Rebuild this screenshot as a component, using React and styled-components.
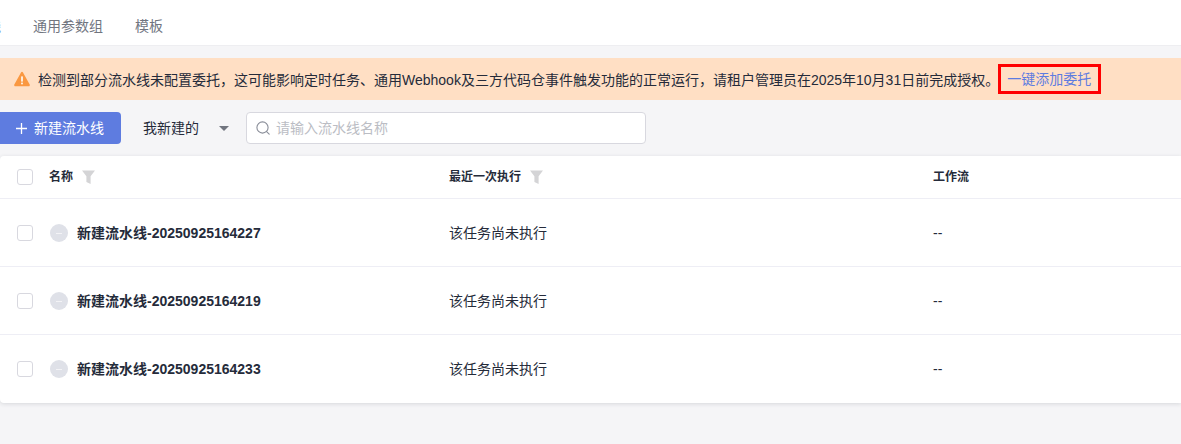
import React from 'react';
import styled, { createGlobalStyle } from 'styled-components';

const GlobalStyle = createGlobalStyle`
  html, body {
    margin: 0;
    padding: 0;
    height: 100%;
    background: #f5f5f7;
  }
  body {
    font-family: "Liberation Sans", "Noto Sans CJK SC", sans-serif;
    font-size: 14px;
    color: #252b3a;
    overflow: hidden;
  }
`;

const Page = styled.div`
  width: 1181px;
  height: 444px;
  overflow: hidden;
  background: #f5f5f7;
`;

const Nav = styled.nav`
  height: 45px;
  display: flex;
  align-items: center;
  gap: 32px;
  margin-left: -41px;
  background: #fff;
  border-bottom: 1px solid #eeeef1;
`;

const Tab = styled.a`
  font-size: 14px;
  line-height: 18px;
  margin-top: 10px;
  margin-bottom: 4px;
  color: ${props => (props.$active ? '#5e7ce0' : '#71757f')};
`;

const Banner = styled.div`
  height: 42px;
  margin-top: 12px;
  display: flex;
  align-items: center;
  padding-left: 14px;
  background: #ffdfc4;
`;

const BannerText = styled.span`
  margin-left: 8px;
  white-space: nowrap;
`;

const DelegateLink = styled.a`
  margin-left: -1px;
  padding: 0 7px 0 6px;
  height: 24px;
  line-height: 24px;
  border: 3px solid #ff0000;
  color: #5e7ce0;
  white-space: nowrap;
`;

const Toolbar = styled.div`
  display: flex;
  align-items: center;
  height: 32px;
  margin-top: 12px;
  margin-left: -20px;
`;

const CreateButton = styled.button`
  width: 141px;
  height: 32px;
  display: flex;
  align-items: center;
  padding: 0 0 0 36px;
  gap: 7px;
  border: 0;
  border-radius: 4px;
  background: #5e7ce0;
  color: #fff;
  font: inherit;
`;

const ToolbarLabel = styled.span`
  padding-bottom: 2px;
`;

const OwnerSelect = styled.div`
  display: flex;
  align-items: center;
  margin-left: 22px;
  width: 103px;
  justify-content: space-between;
  padding-right: 17px;
  box-sizing: border-box;
`;

const Caret = styled.span`
  width: 0;
  height: 0;
  border-left: 5px solid transparent;
  border-right: 5px solid transparent;
  border-top: 5px solid #71757f;
`;

const SearchBox = styled.div`
  width: 400px;
  height: 32px;
  display: flex;
  align-items: center;
  gap: 5px;
  padding-left: 8px;
  box-sizing: border-box;
  background: #fff;
  border: 1px solid #d8d8df;
  border-radius: 4px;
  color: #bbbdc4;
`;

const Table = styled.div`
  margin-top: 12px;
  background: #fff;
  border-radius: 4px 0 0 4px;
  box-shadow: 0 1px 4px rgba(37, 43, 58, 0.14);
  height: 247px;
`;

const Row = styled.div`
  display: grid;
  grid-template-columns: 49px 400px 484px 1fr;
  align-items: center;
  height: ${props => (props.$head ? '42px' : '66px')};
  padding-top: ${props => (props.$head ? '0' : '1px')};
  border-bottom: ${props => (props.$last ? '0' : '1px solid #eeeef5')};
  font-weight: ${props => (props.$head ? 700 : 400)};
  font-size: ${props => (props.$head ? '12px' : '14px')};
`;

const CheckCell = styled.div`
  padding-left: 17px;
  display: flex;
  align-items: center;
`;

const Checkbox = styled.span`
  width: 14px;
  height: 14px;
  border: 1px solid #d8d8df;
  border-radius: 3px;
  background: #fff;
`;

const HeadCell = styled.div`
  display: flex;
  align-items: center;
  gap: 9px;
  line-height: 16px;
`;

const NameCell = styled.div`
  display: flex;
  align-items: center;
  gap: 9px;
  padding-left: 1px;
  font-weight: 700;
`;

const CellText = styled.span`
  display: block;
  padding-bottom: 2px;
`;

const StatusDot = styled.span`
  width: 18px;
  height: 18px;
  border-radius: 50%;
  background: #dfe1e8;
  display: flex;
  align-items: center;
  justify-content: center;

  &:before {
    content: '';
    width: 6px;
    height: 1px;
    background: #f3f3f6;
  }
`;

const WarnIcon = () => (
  <svg width="16" height="16" viewBox="0 0 16 16">
    <path d="M8 .8a1.2 1.2 0 0 1 1 .6l6.7 12.2a1.1 1.1 0 0 1-1 1.6H1.3a1.1 1.1 0 0 1-1-1.6L7 1.4a1.2 1.2 0 0 1 1-.6z" fill="#fa9841" />
    <rect x="7.2" y="5.4" width="1.6" height="5.2" fill="#fff" />
    <rect x="7.2" y="11.6" width="1.6" height="1.7" fill="#fff" />
  </svg>
);

const PlusIcon = () => (
  <svg width="11" height="11" viewBox="0 0 11 11">
    <path d="M5.5 0v11M0 5.5h11" stroke="#fff" strokeWidth="1.3" fill="none" />
  </svg>
);

const SearchIcon = () => (
  <svg width="16" height="16" viewBox="0 0 16 16" fill="none" stroke="#8a8e99" strokeWidth="1.1">
    <circle cx="7.5" cy="7.5" r="5.6" />
    <path d="M11.6 11.6l2.6 2.6" strokeLinecap="round" />
  </svg>
);

const FilterIcon = () => (
  <svg width="13" height="14" viewBox="0 0 13 14">
    <path d="M0 .5h13L8.6 6.2V14L4.4 12V6.2z" fill="#d4d4d6" />
  </svg>
);

const pipelines = [
  '新建流水线-20250925164227',
  '新建流水线-20250925164219',
  '新建流水线-20250925164233',
];

const App = () => {
  return (
    <Page>
      <GlobalStyle />
      <Nav>
        <Tab $active>流水线</Tab>
        <Tab>通用参数组</Tab>
        <Tab>模板</Tab>
      </Nav>
      <Banner>
        <WarnIcon />
        <BannerText>检测到部分流水线未配置委托，这可能影响定时任务、通用Webhook及三方代码仓事件触发功能的正常运行，请租户管理员在2025年10月31日前完成授权。</BannerText>
        <DelegateLink>一键添加委托</DelegateLink>
      </Banner>
      <Toolbar>
        <CreateButton>
          <PlusIcon />
          <ToolbarLabel>新建流水线</ToolbarLabel>
        </CreateButton>
        <OwnerSelect>
          <ToolbarLabel>我新建的</ToolbarLabel>
          <Caret />
        </OwnerSelect>
        <SearchBox>
          <SearchIcon />
          <ToolbarLabel>请输入流水线名称</ToolbarLabel>
        </SearchBox>
      </Toolbar>
      <Table>
        <Row $head>
          <CheckCell><Checkbox /></CheckCell>
          <HeadCell>名称<FilterIcon /></HeadCell>
          <HeadCell>最近一次执行<FilterIcon /></HeadCell>
          <HeadCell>工作流</HeadCell>
        </Row>
        {pipelines.map((name, i) => (
          <Row key={name} $last={i === pipelines.length - 1}>
            <CheckCell><Checkbox /></CheckCell>
            <NameCell><StatusDot /><CellText>{name}</CellText></NameCell>
            <CellText>该任务尚未执行</CellText>
            <div>--</div>
          </Row>
        ))}
      </Table>
    </Page>
  );
};

export default App;
